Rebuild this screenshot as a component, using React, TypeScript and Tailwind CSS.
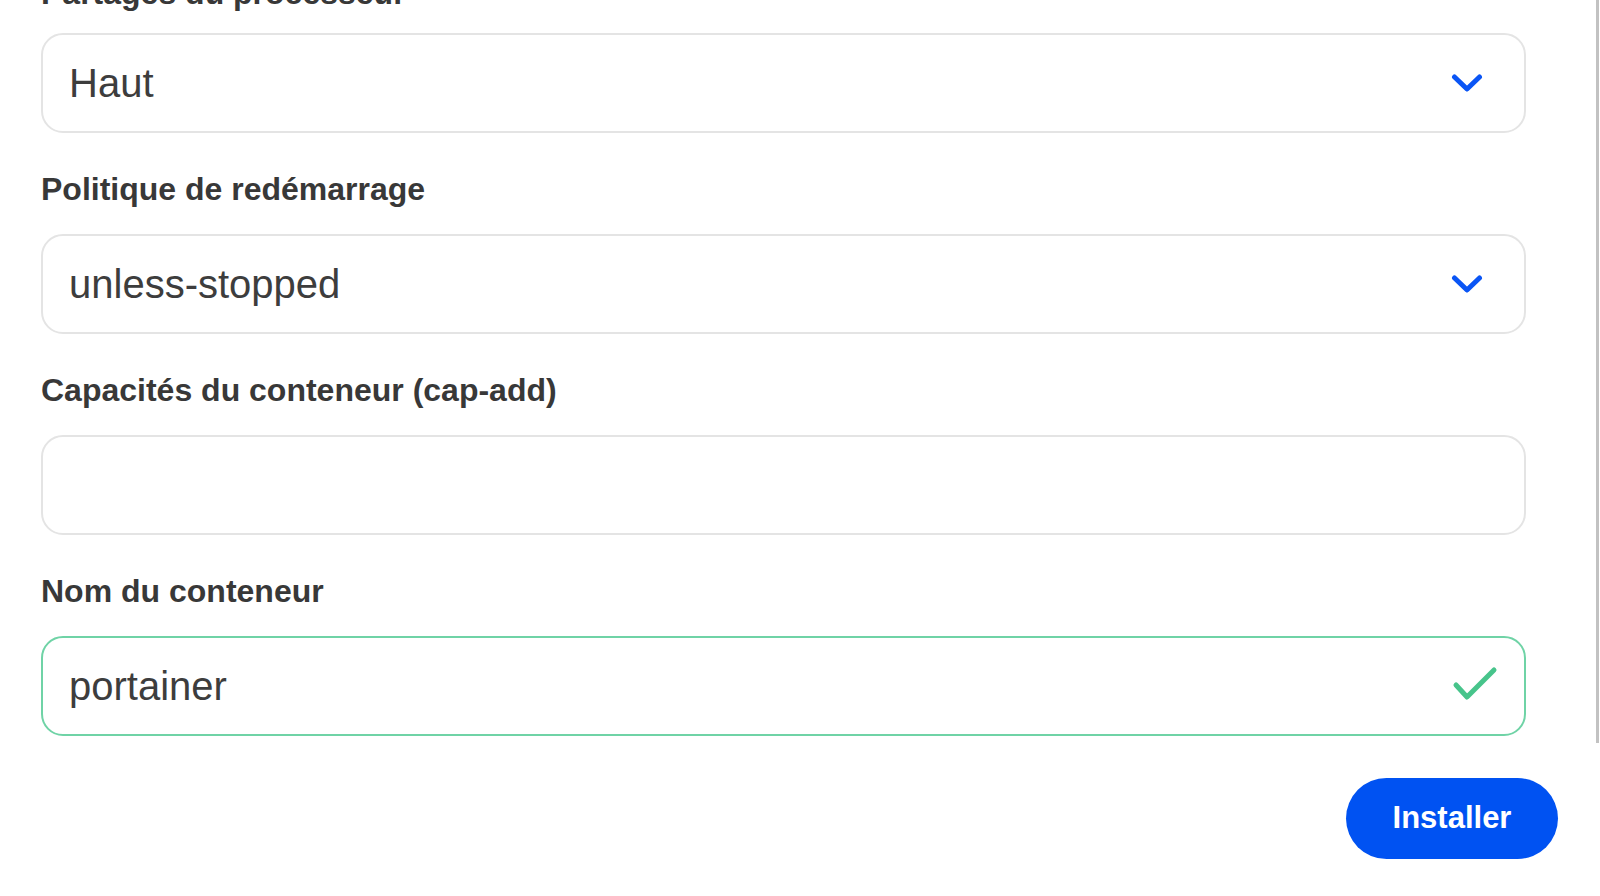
const Chevron = () => (
  <svg width="32" height="22" viewBox="0 0 32 22" fill="none">
    <path d="M3.5 5 L16 17 L28.5 5" stroke="#0a55f5" strokeWidth="5" strokeLinecap="round" strokeLinejoin="round" />
  </svg>
);

const Check = () => (
  <svg width="46" height="40" viewBox="0 0 46 40" fill="none">
    <path d="M4 19 L15 31 L42 4" stroke="#47c48b" strokeWidth="5" strokeLinecap="round" strokeLinejoin="round" />
  </svg>
);

const Label = ({ children, className = "" }: { children: string; className?: string }) => (
  <div className={`text-[32px] leading-[32px] font-bold text-[#383838] ${className}`}>{children}</div>
);

const Field = ({
  value,
  right,
  valid,
}: {
  value?: string;
  right?: React.ReactNode;
  valid?: boolean;
}) => (
  <div
    className={`h-[100px] rounded-[22px] border-2 flex items-center justify-between pl-[26px] bg-white ${
      valid ? "border-[#6fd3a6] pr-[26px]" : "border-[#e4e4e4] pr-[41px]"
    }`}>
    <span className="text-[40px] text-[#3d3d3d]">{value}</span>
    {right}
  </div>
);

export default function App() {
  return (
    <div
      className="h-[896px] w-[1600px] overflow-hidden bg-white flex"
      style={{ fontFamily: '"Liberation Sans", Arial, sans-serif' }}>
      <div className="flex-1 pl-[41px] pr-[38px] flex flex-col">
        <div className="pr-[32px] flex flex-col">
          {/* CPU shares */}
          <Label className="-mt-[23px]">Partages du processeur</Label>
          <div className="mt-[24px]">
            <Field value="Haut" right={<Chevron />} />
          </div>

          {/* Restart policy */}
          <Label className="mt-[40px]">Politique de redémarrage</Label>
          <div className="mt-[29px]">
            <Field value="unless-stopped" right={<Chevron />} />
          </div>

          {/* cap-add */}
          <Label className="mt-[40px]">Capacités du conteneur (cap-add)</Label>
          <div className="mt-[29px]">
            <Field />
          </div>

          {/* Name */}
          <Label className="mt-[40px]">Nom du conteneur</Label>
          <div className="mt-[29px]">
            <Field value="portainer" valid right={<Check />} />
          </div>
        </div>

        <div className="flex justify-end mt-[42px]">
          <button className="w-[212px] h-[81px] rounded-full bg-[#0052f2] text-white text-[31px] font-bold">
            Installer
          </button>
        </div>
      </div>

      {/* scrollbar */}
      <div className="w-[4px]">
        <div className="w-[3px] h-[743px] bg-[#c2c2c2]"></div>
      </div>
    </div>
  );
}
